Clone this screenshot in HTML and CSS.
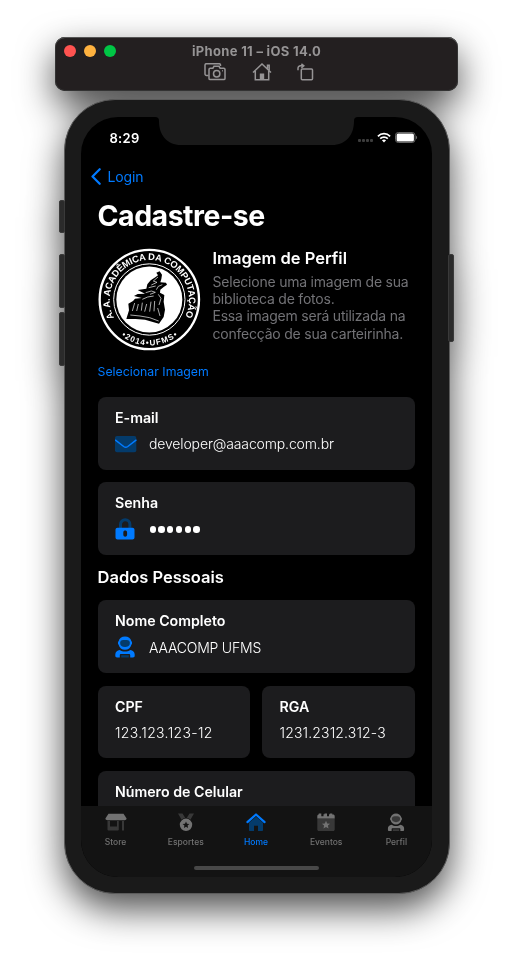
FILE: index.html
```html
<!DOCTYPE html>
<html lang="pt-BR">
<head>
<meta charset="utf-8">
<title>Cadastre-se</title>
<link rel="stylesheet" href="styles.css">
</head>
<body>
<svg class="defs" width="0" height="0" aria-hidden="true">
  <symbol id="astronaut" viewBox="0 0 20 22">
    <path d="M10 .5c3.300 0 5.800 2 6.400 4.800.9.300.9 3.100 0 3.400C15.700 11.800 13.200 13.800 10 13.800S4.300 11.800 3.600 8.700c-.9-.3-.9-3.100 0-3.400C4.200 2.500 6.700.5 10 .5z"/>
    <path class="dim" d="M8.300 4h3.400c2 0 3.200 1.100 3.200 2.900 0 2.400-1.900 4-4.900 4s-4.900-1.600-4.900-4C5.100 5.100 6.300 4 8.300 4z"/>
    <path d="M4.800 14C6.200 15 8 15.600 10 15.600s3.800-.6 5.200-1.600c2.700.3 4.500 2.100 4.500 4.600v1.200c0 1-.7 1.700-1.700 1.700h-2.800v-2.200c0-.7-.5-1.200-1.200-1.200H6c-.7 0-1.200.5-1.200 1.200v2.200H2c-1 0-1.700-.7-1.700-1.700v-1.200c0-2.500 1.800-4.300 4.500-4.600z"/>
    <path class="dim" d="M6.200 19.300h7.600v2.200H6.200z"/>
  </symbol>
</svg>
<div class="simulator">
  <header class="window-bar">
    <div class="window-title">
      <div class="lights"><i class="light red"></i><i class="light yellow"></i><i class="light green"></i></div>
      <span class="window-name">iPhone 11 – iOS 14.0</span>
    </div>
    <div class="tools">
      <svg width="22" height="18" viewBox="0 0 22 18"><path d="M4.500 12.500H2.500a1.500 1.500 0 0 1-1.500-1.500V2a1.300 1.300 0 0 1 1.300-1.300h12.900A1.300 1.300 0 0 1 16.500 2v1"/><path d="M6.200 5.200h2.700l1.100-1.900h5l1.100 1.900h3.700c.7 0 1.200.5 1.200 1.200v9c0 .7-.5 1.200-1.200 1.200H6.200c-.7 0-1.200-.5-1.200-1.200v-9c0-.7.5-1.200 1.200-1.200z"/><circle cx="12.700" cy="10.700" r="3.200"/><path d="M18 7.800h.8"/></svg>
      <svg width="20" height="18" viewBox="0 0 20 18"><path d="M1 9.500 10 1l9 8.500M3.300 8v8.700h13.400V8M15.500 5.500V2.200h1.700v5"/><path class="fill" d="M7.800 10.500h4.400v6H7.800z"/></svg>
      <svg width="17" height="18" viewBox="0 0 17 18"><rect x="4.300" y="6" width="11.200" height="10.800" rx="1"/><path d="M1 7.200V5.500c0-1.500 1-2.700 2.600-2.700H6M4.400.8l2.400 2-2.400 2"/></svg>
    </div>
  </header>

  <div class="phone">
    <i class="side-button mute"></i><i class="side-button up"></i><i class="side-button down"></i><i class="side-button power"></i>
    <div class="screen">
      <svg class="notch" width="203" height="29" viewBox="0 0 203 29"><path d="M0 0h203v1c-3 0-4 1.500-4 4 0 14-8 24-22 24H26C12 29 4 19 4 5 4 2.500 3 1 0 1z"/></svg>
      <div class="status-bar">
        <span class="time">8:29</span>
        <div class="status-icons">
          <span class="dots"><i></i><i></i><i></i><i></i></span>
          <svg width="14" height="11" viewBox="0 0 14 11"><g fill="none" stroke="#fff" stroke-width="1.700"><path d="M.9 4.300C4.300.8 9.700.8 13.100 4.300"/><path d="M3.200 6.700c2.100-2.200 5.500-2.200 7.600 0"/></g><path fill="#fff" d="M4.900 8.300C6.200 7.100 7.800 7.100 9.100 8.300L7 10.500z"/></svg>
          <svg width="23" height="11" viewBox="0 0 23 11"><rect x=".5" y=".5" width="19.500" height="10" rx="2.800" fill="none" stroke="#666"/><rect x="1.600" y="1.600" width="17.300" height="7.800" rx="1.500" fill="#fff"/><path fill="#666" d="M21 3.700c1.500.7 1.500 2.900 0 3.600z"/></svg>
        </div>
      </div>
      <nav class="back">
        <svg width="10" height="17" viewBox="0 0 10 17"><path d="M8.700 1.200 1.500 8.500l7.200 7.300"/></svg>
        <span>Login</span>
      </nav>
      <main class="content">
        <h1>Cadastre-se</h1>
        <section class="profile">
          <svg class="crest" width="103" height="103" viewBox="39 39 309 309">
            <circle cx="193" cy="193.500" r="149" fill="#000" stroke="#fff" stroke-width="7"/>
            <circle cx="193" cy="193.500" r="107" fill="none" stroke="#fff" stroke-width="3"/>
            <circle cx="193" cy="193.500" r="99" fill="#fff"/>
            <path id="arc-top" fill="none" d="M87.500 249A119 119 0 1 1 298.500 249"/>
            <path id="arc-bottom" fill="none" d="M109 302A137 137 0 0 0 279 301"/>
            <text class="crest-text"><textPath href="#arc-top" textLength="484">A. A. ACADÊMICA DA COMPUTAÇÃO</textPath></text>
            <text class="crest-text small"><textPath href="#arc-bottom" textLength="182">•2014•UFMS•</textPath></text>
            <path d="M124 252L132 226 130 206 144 198 150 191 170 189 147 183 158 177 180 176 158 165 184 161 187 148 197 136 212 126 219 121 214 113 224 109 231 119 229 132 226 142 243 143 246 149 236 156 226 164 225 173 238 180 236 200 240 224 236 246 222 266 206 262 180 254 152 252z"/>
            <path class="fur" d="M219 126L205 138 216 142 199 150M191 158L212 153M232 149L220 154 214 164M182 173L199 168 211 172 195 178M172 193L188 186 206 183M149 204L142 228M160 207L155 228M172 203L169 227M185 207L179 230M198 200L194 230M209 198L207 229M220 178L228 190 222 210M218 219L225 243M136 240L165 243 194 248 221 258"/>
          </svg>
          <div class="profile-text">
            <h2>Imagem de Perfil</h2>
            <p>Selecione uma imagem de sua<br>biblioteca de fotos.<br>Essa imagem será utilizada na<br>confecção de sua carteirinha.</p>
          </div>
        </section>
        <a class="select">Selecionar Imagem</a>
        <div class="fields">
          <div class="card">
            <h3>E-mail</h3>
            <div class="value"><svg class="blue" width="22" height="22" viewBox="0 0 22 22"><rect class="dim" x="0" y="3" width="21.300" height="16.200" rx="2"/><path class="line" d="M.5 7.200l8.200 6.300c1.500 1.100 2.600 1.100 4.100 0l8.200-6.300"/></svg><span class="mail">developer@aaacomp.com.br</span></div>
          </div>
          <div class="card">
            <h3>Senha</h3>
            <div class="value"><svg class="blue" width="22" height="22" viewBox="0 0 22 22"><path class="dim-line" d="M5.500 10V6.500a4.700 4.700 0 0 1 9.400 0V10"/><path fill-rule="evenodd" d="M2.500 9.700h15c1.100 0 2 .9 2 2v7.900c0 1.100-.9 2-2 2h-15c-1.100 0-2-.9-2-2v-7.900c0-1.100.9-2 2-2zm5.800 4.800v2.300c0 2.600 3.800 2.600 3.800 0v-2.300c0-2.600-3.800-2.600-3.800 0z"/></svg><span class="password"><i></i><i></i><i></i><i></i><i></i><i></i></span></div>
          </div>
        </div>
        <h2 class="section-title">Dados Pessoais</h2>
        <div class="fields">
          <div class="card">
            <h3>Nome Completo</h3>
            <div class="value"><svg class="blue" width="22" height="22" viewBox="0 0 22 22"><use href="#astronaut" width="20" height="22"/></svg><span class="name">AAACOMP UFMS</span></div>
          </div>
          <div class="pair">
            <div class="card"><h3>CPF</h3><div class="value"><span class="cpf">123.123.123-12</span></div></div>
            <div class="card"><h3>RGA</h3><div class="value"><span class="rga">1231.2312.312-3</span></div></div>
          </div>
          <div class="card"><h3>Número de Celular</h3></div>
        </div>
      </main>
      <footer class="tab-bar">
        <div class="tabs">
          <div class="tab"><svg width="22" height="19" viewBox="0 0 22 19"><path class="dim" d="M2.500 8H5v5.500h7V8h1.800v8.500a1 1 0 0 1-1 1H3.500a1 1 0 0 1-1-1zM17 8h2v9.500h-2z"/><path d="M3.500.8h15l2.800 4.200c.8 1.300-.3 2.300-1.800 2.300h-17c-1.500 0-2.600-1-1.800-2.300z"/></svg><span>Store</span></div>
          <div class="tab"><svg width="20" height="19" viewBox="0 0 20 19"><path class="dim" d="M2 .5h4.500L9.300 5c-1.500.2-2.700.8-3.700 1.800zM18 .5h-4.500L10.700 5c1.500.2 2.700.8 3.700 1.800z"/><path fill-rule="evenodd" d="M10 5.600a6.200 6.200 0 1 0 0 12.400 6.200 6.200 0 0 0 0-12.400zm0 2.800l1 2.300 2.400.3-1.800 1.600.5 2.400-2.100-1.200-2.100 1.200.5-2.400-1.800-1.600 2.400-.3z"/></svg><span>Esportes</span></div>
          <div class="tab active"><svg width="20" height="19" viewBox="0 0 20 19"><path class="dim" d="M10 3.700l7 6V17c0 .6-.4 1-1 1h-4v-5.200H8V18H4c-.6 0-1-.4-1-1V9.700z"/><path class="line roof" d="M1.400 9.100 10 1.500l8.600 7.600"/></svg><span>Home</span></div>
          <div class="tab"><svg width="20" height="19" viewBox="0 0 20 19"><path class="dim" d="M1.300 5.500h17.400v11c0 .9-.7 1.500-1.500 1.500H2.800c-.8 0-1.500-.6-1.500-1.500z"/><path d="M1.300 5.500V3c0-.9.700-1.500 1.500-1.500V.5h2.500v2.800h2.200v-2h1V.5H11v2.800h2v-2h.8V.5h2.500v1h.9c.8 0 1.500.6 1.500 1.500v2.500zM10 7.700l1.200 2.700 2.900.3-2.200 1.900.6 2.900-2.500-1.500-2.500 1.500.6-2.900-2.200-1.900 2.900-.3z"/></svg><span>Eventos</span></div>
          <div class="tab"><svg width="20" height="19" viewBox="0 0 20 19"><use href="#astronaut" x="1.500" y="0" width="17" height="18.500"/></svg><span>Perfil</span></div>
        </div>
        <div class="home-indicator"></div>
      </footer>
    </div>
  </div>
</div>
</body>
</html>
```
FILE: styles.css
```css
* { box-sizing: border-box; }
body { margin: 0; width: 513px; height: 968px; overflow: hidden; background: #fff; font-family: Inter, "Liberation Sans", sans-serif; color: #fff; }
.defs { position: absolute; }
h1, h2, h3, p { margin: 0; }
svg { display: block; flex: none; }

.simulator { display: flex; flex-direction: column; align-items: center; gap: 8px; padding-top: 37px; filter: drop-shadow(0 15px 18px rgba(0, 0, 0, .7)); }
.window-bar { width: 403px; height: 54px; border-radius: 10px; background: #231f20; box-shadow: inset 0 1px #555, inset 0 0 0 1px #333; }
.window-title { display: grid; grid-template-columns: 1fr auto 1fr; align-items: center; height: 28px; padding: 0 9px; }
.lights { display: flex; gap: 8px; }
.light { width: 12px; height: 12px; border-radius: 50%; }
.red { background: #ff5350; }
.yellow { background: #ffb23f; }
.green { background: #00c645; }
.window-name { font-size: 13px; font-weight: 700; color: #969495; letter-spacing: .32px; }
.tools { display: flex; justify-content: center; gap: 25.500px; margin-top: -2px; padding-left: 5px; }
.tools svg { fill: none; stroke: #969495; stroke-width: 1.500; }
.tools .fill { fill: #969495; stroke: none; }

.phone { position: relative; width: 386px; height: 795px; border-radius: 51px; background: #1a1a1a; border: 1px solid #5b5b5b; padding: 17px 16px 16px; }
.side-button { position: absolute; width: 6px; background: #2b2b2b; border: 1px solid #3a3a3a; border-radius: 2px; }
.mute { left: -6px; top: 100px; height: 33px; }
.up { left: -6px; top: 154px; height: 54px; }
.down { left: -6px; top: 212px; height: 54px; }
.power { right: -5px; top: 154px; height: 88px; }
.screen { position: relative; display: flex; flex-direction: column; width: 351px; height: 760px; overflow: hidden; border-radius: 37px; background: #000; }
.notch { position: absolute; left: 74px; top: -1px; fill: #1a1a1a; }

.status-bar { display: flex; justify-content: space-between; align-items: center; height: 41px; padding: 0 14px 0 29px; }
.time { font-size: 13px; font-weight: 600; letter-spacing: .3px; }
.status-icons { display: flex; align-items: center; gap: 4px; }
.dots { display: flex; gap: 1px; padding-top: 6px; }
.dots i { width: 3px; height: 3px; border-radius: 1px; background: #3d3d3d; }
.back { display: flex; align-items: center; gap: 7px; height: 37px; padding-left: 10px; color: #007aff; font-size: 14px; letter-spacing: -.15px; }
.back svg { fill: none; stroke: #007aff; stroke-width: 2.200; stroke-linecap: round; stroke-linejoin: round; }

.content { flex: 1; min-height: 0; overflow: hidden; padding: 0 17px; }
h1 { height: 52px; line-height: 41px; font-size: 28.500px; font-weight: 700; letter-spacing: -.5px; }
.profile { display: flex; gap: 12px; height: 105px; }
.crest { margin-top: .5px; }
.crest-text { font: 700 28px "Liberation Sans", sans-serif; fill: #fff; }
.crest-text.small { font-size: 24px; }
.fur { fill: none; stroke: #fff; stroke-width: 2; }
.profile-text { flex: 1; white-space: nowrap; }
h2 { font-size: 16.500px; line-height: 22px; font-weight: 600; }
.profile-text p { margin-top: 4px; font-size: 14px; line-height: 17.200px; letter-spacing: -.22px; color: #727276; }
.select { display: block; height: 45px; line-height: 39px; font-size: 12.300px; color: #007aff; }
.fields { display: grid; gap: 12.700px; }
.card { height: 72.700px; padding: 12px 17.500px 0; border-radius: 8px; background: #1c1c1e; }
h3 { font-size: 14.200px; line-height: 18px; font-weight: 600; }
.value { display: flex; align-items: center; gap: 12px; height: 22px; margin-top: 5.500px; font-size: 14px; font-weight: 300; }
.blue { --dim: #043b6b; fill: #007aff; }
.dim { fill: var(--dim); }
.line { fill: none; stroke: #007aff; stroke-width: 1.500; stroke-linecap: round; stroke-linejoin: round; }
.dim-line { fill: none; stroke: #043b6b; stroke-width: 3; }
.mail { letter-spacing: -.14px; }
.name { letter-spacing: -.2px; padding-top: 1px; }
.cpf { letter-spacing: .33px; padding-top: 1px; }
.rga { letter-spacing: .15px; padding-top: 1px; }
.password { display: flex; gap: 2.400px; padding: 1px 0 0 .5px; }
.password i { width: 6.400px; height: 6.400px; border-radius: 50%; background: #fff; }
.section-title { height: 45.200px; line-height: 45px; }
.pair { display: grid; grid-template-columns: 1fr 1fr; gap: 12px; }

.tab-bar { flex: none; height: 71px; background: #131313; }
.tabs { display: grid; grid-template-columns: repeat(5, 1fr); height: 60px; padding-top: 7px; }
.tab { --dim: #383838; display: flex; flex-direction: column; align-items: center; gap: 4px; font-size: 8.500px; line-height: 12px; font-weight: 500; color: #727272; fill: #727272; }
.tab.active { --dim: #043b6b; color: #007aff; fill: #007aff; }
.roof { stroke-width: 2.200; }
.home-indicator { width: 125px; height: 4px; margin: 0 auto; border-radius: 2px; background: #484848; }
```
